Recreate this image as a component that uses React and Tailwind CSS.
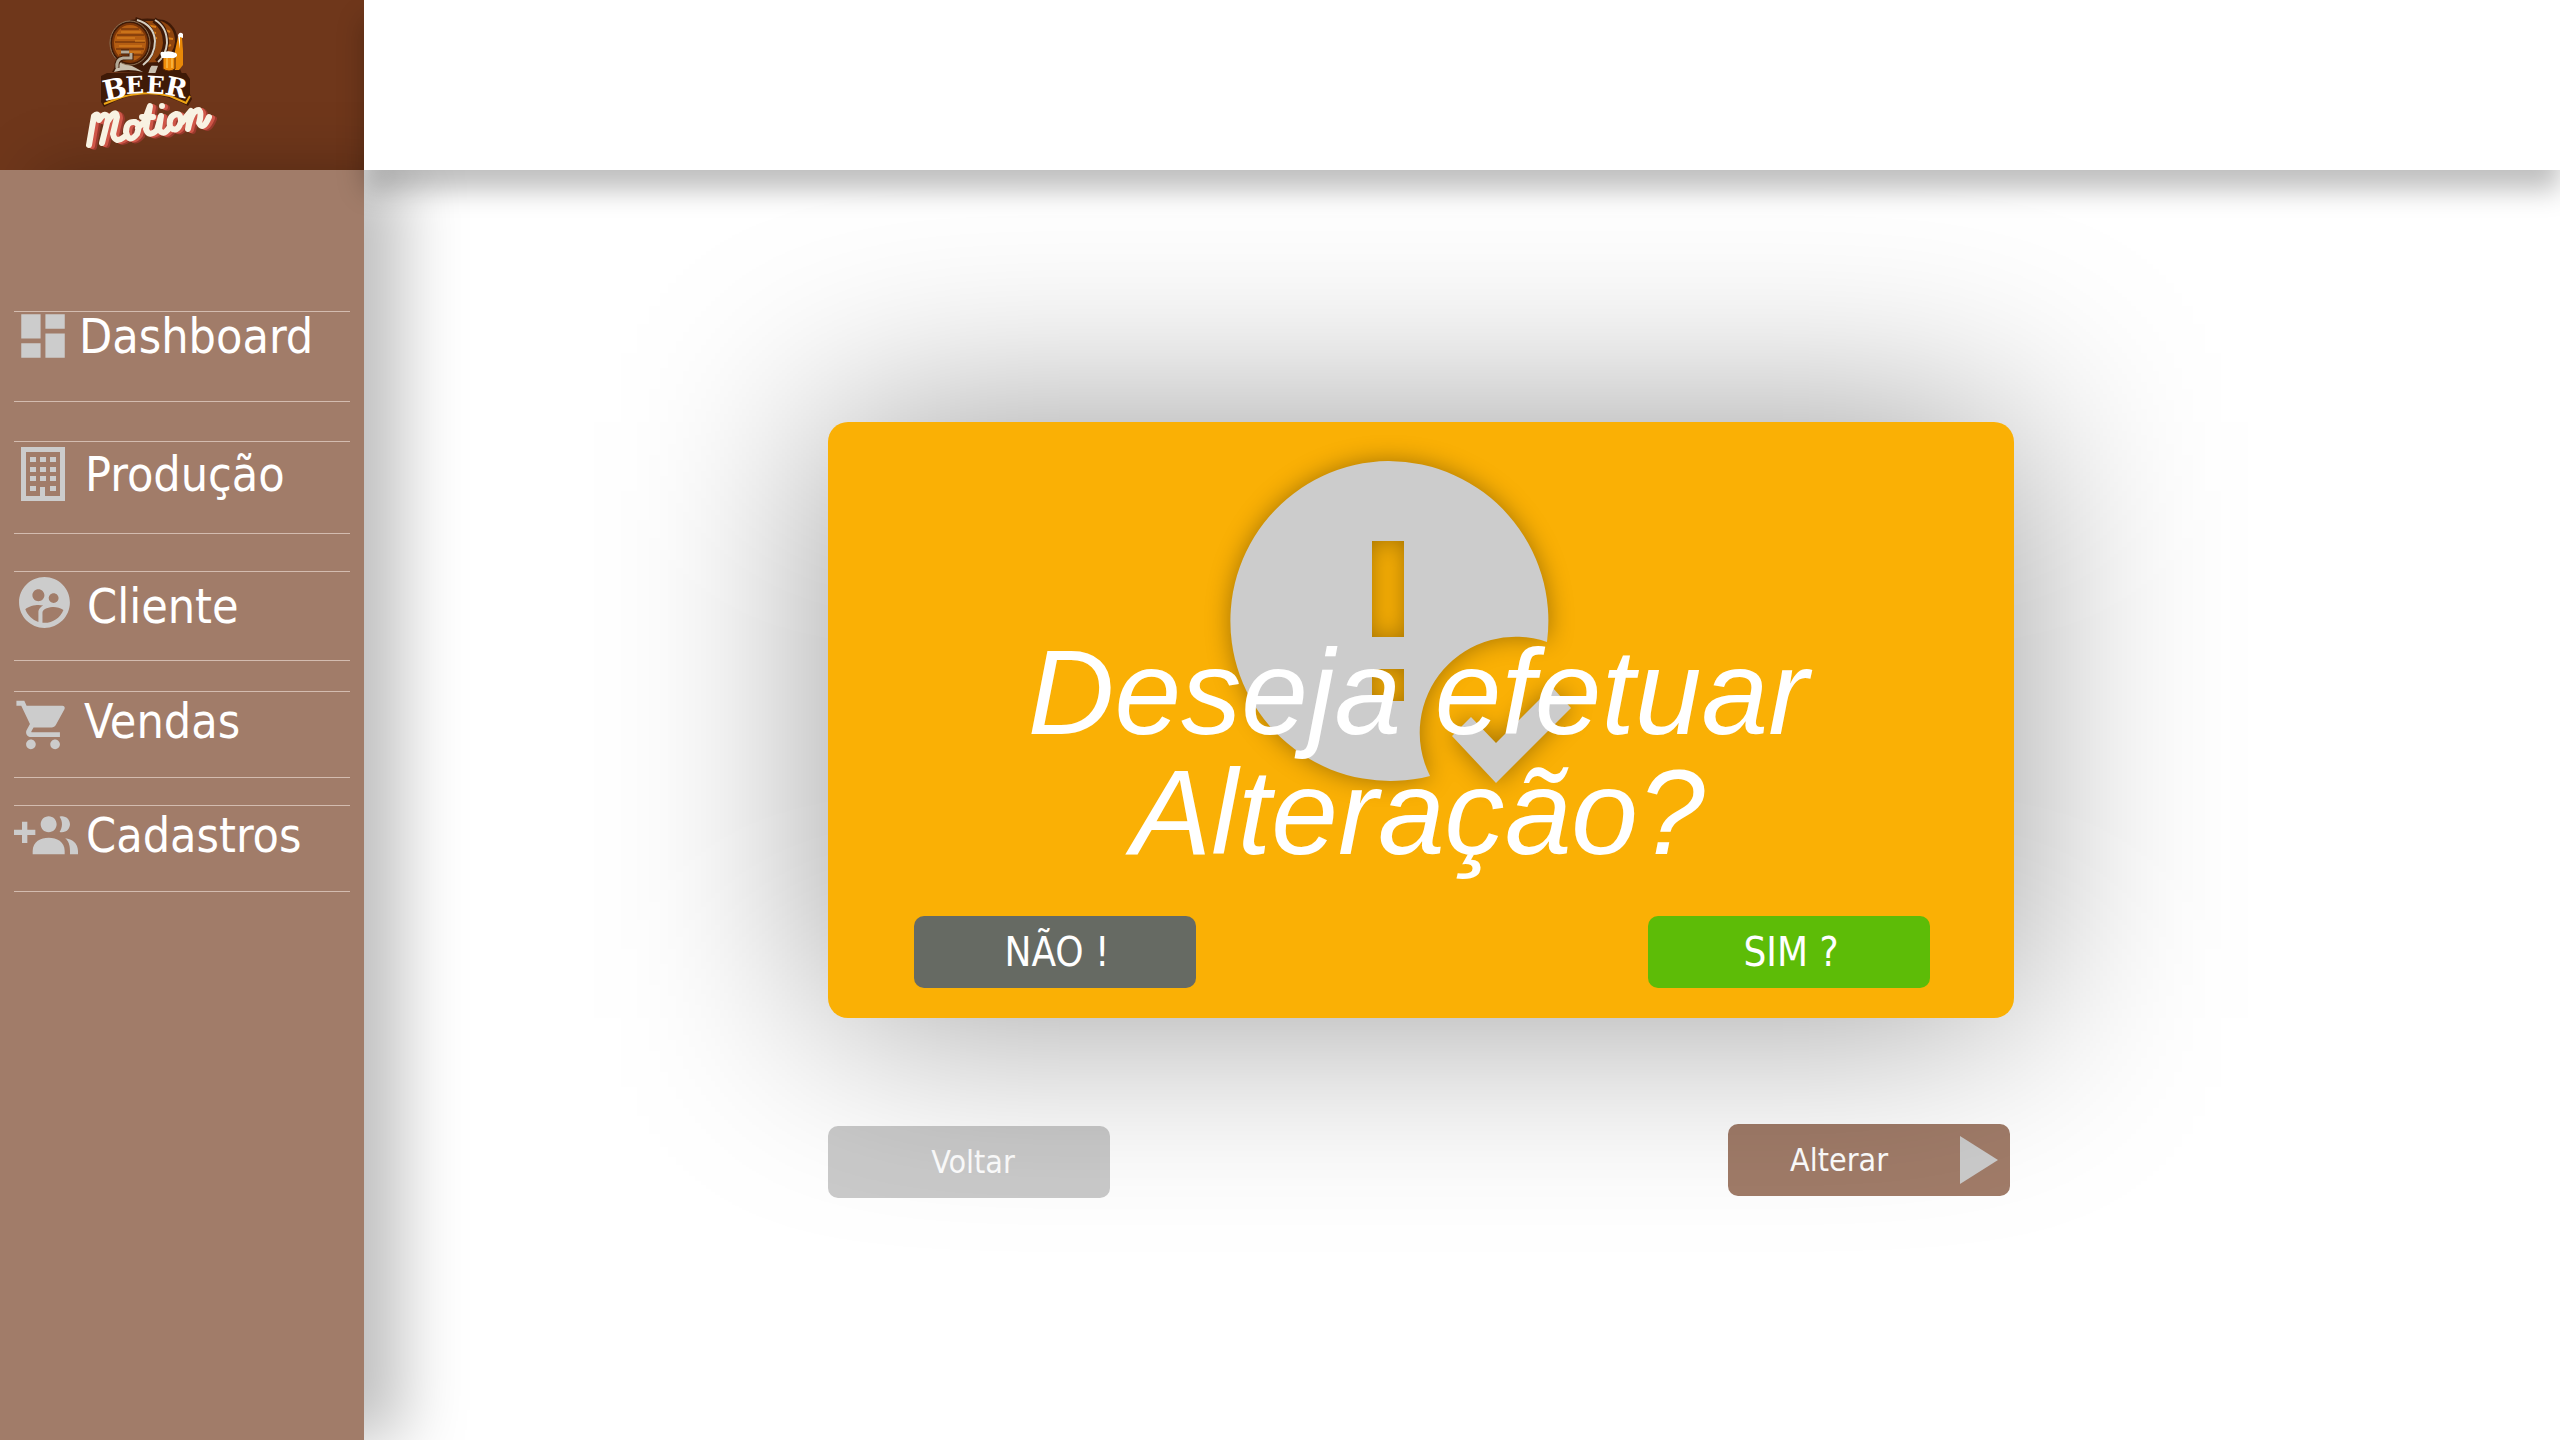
import { MdDashboard, MdShoppingCart, MdSupervisedUserCircle } from "react-icons/md";

const tahoma = "font-['DejaVu_Sans_Condensed','DejaVu_Sans',sans-serif]";

function BuildingIcon() {
  return (
    <svg viewBox="0 0 44 54" className="h-[54px] w-11 shrink-0" fill="#ccc" aria-hidden="true">
      <path fillRule="evenodd" d="M0 0H44V54H0ZM5 5V49H19V40H24V49H39V5Z" />
      <path d="M9 10h6v5H9zM19 10h6v5h-6zM29 10h6v5h-6zM9 20h6v5H9zM19 20h6v5h-6zM29 20h6v5h-6zM9 29h6v5H9zM19 29h6v5h-6zM29 29h6v5h-6zM9 39h6v5H9zM29 39h6v5h-6z" />
    </svg>
  );
}

function GroupAddIcon() {
  return (
    <svg viewBox="0 0 24 24" className="size-[64px] shrink-0" fill="#ccc" aria-hidden="true">
      <path d="M8 10H5V7H3v3H0v2h3v3h2v-3h3v-2zm10 1c1.66 0 2.99-1.34 2.99-3S19.66 5 18 5c-.32 0-.63.05-.91.14.57.81.9 1.79.9 2.86s-.34 2.04-.9 2.86c.28.09.59.14.91.14zm-5 0c1.66 0 2.99-1.34 2.99-3S14.66 5 13 5c-1.66 0-3 1.34-3 3s1.34 3 3 3z" />
      <path d="M13 13c-3 0-6 1.4-6 5v1.2h12V18c0-3.6-3-5-6-5zM19.2 13.2c1.2 1 1.8 2.4 1.8 4.8v1.2h3V18c0-2.8-2.2-4.6-4.8-4.8z" />
    </svg>
  );
}

function Script() {
  return (
    <path d="M89 145L94 116Q99 112 99 120Q106 110 108 119L102 143M108 121Q116 108 117 117L113 134Q115 144 124 137M135 122Q126 121 126 132Q129 144 137 134Q141 123 134 122M138 128L144 122L150 106L146 129Q149 138 157 130L161 116L159 129Q163 137 169 128M177 114Q168 116 170 127Q177 134 181 122Q181 113 176 114M182 122L191 111L188 129Q192 110 199 110Q202 113 199 123Q203 131 209 117M142 117H153M162 106V106" />
  );
}

function Logo() {
  return (
    <svg viewBox="70 10 160 150" className="relative top-[10px] ml-[70px] h-[150px] w-40" role="img" aria-label="Beer Motion">
      <path d="M112 72L120 58H176L182 74Z" fill="#3f1a07" />
      <path d="M114 72L119 62Q130 64 143 72Q128 68 114 72M148 74Q152 60 162 55L155 74Z" fill="#c9bfae" />
      <path d="M130 20Q148 17 164 20Q177 25 178 42Q177 58 162 66L130 65Z" fill="#3f1a07" />
      <path d="M134 21H161Q175 26 175 42Q174 54 160 62L136 63Z" fill="#8f450e" />
      <path d="M146 25l10 2M149 32l7 1M150 39l7-1M149 47l7-2M163 29l7 3M166 38l7 1M165 47l6-2M161 56l5-4" stroke="#d97c16" strokeWidth="2" />
      <path d="M135 20Q152 25 153 41Q153 56 141 65M154 20Q166 27 166 43Q165 55 157 62" fill="none" stroke="#3f1a07" strokeWidth="6" />
      <path d="M137 20Q154 25 155 41Q155 56 143 65M155 20Q167 27 167 43Q166 55 158 62" fill="none" stroke="#d5cfc2" strokeWidth="2" />
      <ellipse cx="130" cy="43" rx="20" ry="22" fill="#3f1a07" stroke="#8d7357" />
      <ellipse cx="130" cy="43" rx="17" ry="19" fill="#b45d12" stroke="#7a3508" strokeWidth="2" />
      <path d="M121 29h18M117 35h27M115 42h30M116 49h28M119 55h23" stroke="#5c2607" />
      <path d="M121 32h20M117 38h18M135 41h10M119 46h23M124 52h17" stroke="#e08a20" strokeWidth="1" />
      <path d="M117 68Q116 59 123 58H131V53M121 52H129" fill="none" stroke="#3f1a07" strokeWidth="5" />
      <path d="M117 68Q116 59 123 58H131V53M121 52H129" fill="none" stroke="#b5aa97" strokeWidth="3" />
      <path d="M178 37H182L183 51V65L179 70H175V51Z" fill="#e98908" />
      <path d="M178 35Q180 31 183 34V38L180 37V49Z" fill="#fff" />
      <path d="M163 56H175V69Q169 73 163 69Z" fill="#ef8d0a" stroke="#572405" />
      <path d="M167 58V68M172 58V68" stroke="#ffd46b" />
      <path d="M161 56Q159 51 164 52Q169 50 176 53Q179 56 174 58H162Z" fill="#fff" />
      <path d="M101 76L107 73H186L190 79V94L192 99L188 106Q145 82 104 107L101 102Z" fill="#3f1a07" />
      <path d="M104 104L122 97Q147 90 170 96L186 103L190 96" fill="none" stroke="#eda414" strokeWidth="2" />
      <text fill="#fff" fontFamily="DejaVu Serif, serif" fontWeight="700">
        <tspan x="105" y="101" fontSize="28" rotate="-12">B</tspan>
        <tspan x="126" y="94" fontSize="24" rotate="-3">E</tspan>
        <tspan x="146" y="93" fontSize="24" rotate="3">E</tspan>
        <tspan x="164" y="94" fontSize="26" rotate="12">R</tspan>
      </text>
      <g fill="none" strokeLinecap="round" strokeLinejoin="round" strokeWidth="6">
        <g stroke="#98392d" transform="translate(5 2)"><Script /></g>
        <g stroke="#cf5648" transform="translate(3 1)"><Script /></g>
        <g stroke="#f8f2e2"><Script /></g>
      </g>
    </svg>
  );
}

const items = [
  { label: "Dashboard", box: "h-[91px] mb-[39px]", row: "h-12 pl-[7px] gap-[14px]", icon: <MdDashboard className="-m-[7px] size-[58px] shrink-0" /> },
  { label: "Produção", box: "h-[93px] mb-[37px]", row: "h-16 pl-[7px] gap-5", icon: <BuildingIcon /> },
  { label: "Cliente", box: "h-[90px] mb-[30px]", row: "h-[68px] gap-3", icon: <MdSupervisedUserCircle className="mb-2 size-[61px] shrink-0" /> },
  { label: "Vendas", box: "h-[87px] mb-[27px]", row: "h-[58px] gap-3", icon: <MdShoppingCart className="mt-2 size-[58px] shrink-0" /> },
  { label: "Cadastros", box: "h-[87px]", row: "h-[58px] gap-2", icon: <GroupAddIcon /> },
];

export default function App() {
  return (
    <div className={`flex min-h-screen overflow-hidden bg-white text-white ${tahoma}`}>
      <div className="relative z-10 flex w-[364px] shrink-0 flex-col">
        <div className="h-[170px] bg-[#6f371b]"><Logo /></div>
        <aside className="grow bg-[#a17c69] px-[14px] pt-[141px] shadow-[38px_0_60px_rgba(0,0,0,0.25)]">
          <nav>
            {items.map((it) => (
              <a key={it.label} href="#" className={`block border-y border-[#d3bcb0] ${it.box}`}>
                <span className={`flex items-center text-5xl text-[#ccc] ${it.row}`}>
                  {it.icon}
                  <span className="text-white">{it.label}</span>
                </span>
              </a>
            ))}
          </nav>
        </aside>
      </div>
      <div className="flex grow flex-col">
        <header className="relative z-20 h-[170px] bg-white shadow-[0_20px_25px_rgba(0,0,0,0.25)]" />
        <main className="grow pl-[464px] pr-[546px] pt-[252px]">
          <div className="relative isolate">
            <div className="pointer-events-none absolute inset-0 bg-black/40 blur-[104px]" />
            <section role="dialog" aria-labelledby="question" className="relative rounded-[20px] bg-[#fab005] pb-[30px] pl-[86px] pr-[84px] pt-[210px]">
              <svg viewBox="0 0 360 326" className="absolute left-[400px] top-[39px] h-[326px] w-[360px] drop-shadow-[0_0_12px_rgba(0,0,0,0.35)]" fill="#ccc" aria-hidden="true">
                <path fillRule="evenodd" d="M160 0A160 160 0 0 1 319 181A96 96 0 0 0 202 315A160 160 0 1 1 160 0ZM144 80V176H176V80ZM144 208V240H176V208Z" />
                <path d="M224 275L243 256L268 282L324 226L343 247L268 322Z" />
              </svg>
              <h1 id="question" className="relative pr-2 text-center font-['Liberation_Sans',Arial,sans-serif] text-[120px] italic leading-[120px]">
                Deseja efetuar<br />Alteração?
              </h1>
              <div className="mt-11 flex justify-between text-[40px]">
                <button className="h-[72px] w-[282px] rounded-[10px] bg-[#666a63] pl-1">NÃO !</button>
                <button className="h-[72px] w-[282px] rounded-[10px] bg-[#5dbc07] pl-1">SIM ?</button>
              </div>
            </section>
          </div>
          <div className="mr-1 mt-[106px] flex items-start justify-between text-[32px]">
            <button className="mt-0.5 h-[72px] w-[282px] rounded-[10px] bg-[#cbcbcb] pl-2">Voltar</button>
            <button className="flex h-[72px] w-[282px] items-center justify-end gap-[72px] rounded-[10px] bg-[#a17c69] pr-3">
              Alterar
              <svg viewBox="0 0 38 48" className="h-12 w-[38px]" fill="#ccc" aria-hidden="true"><path d="M0 0L38 24L0 48Z" /></svg>
            </button>
          </div>
        </main>
      </div>
    </div>
  );
}
